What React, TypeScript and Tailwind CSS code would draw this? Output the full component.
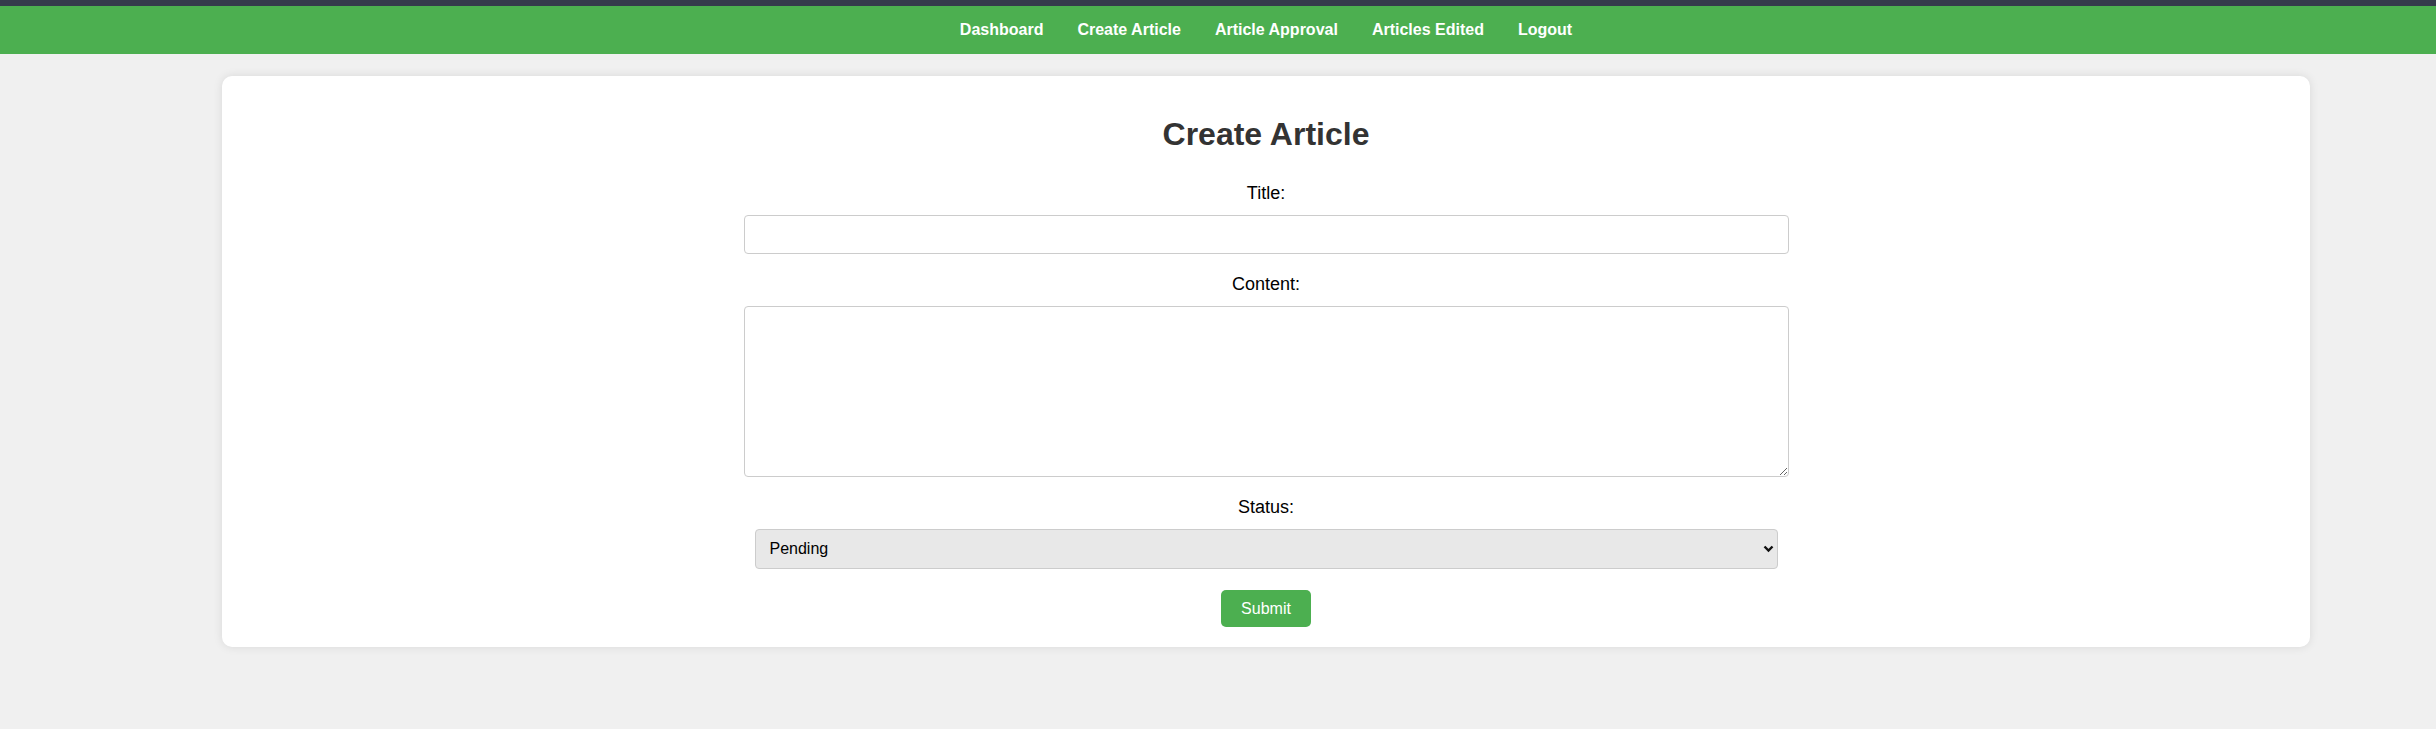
import React from "react";

const navItems = ["Dashboard", "Create Article", "Article Approval", "Articles Edited", "Logout"];

const App: React.FC = () => {
  return (
    <div className="min-h-screen bg-[#f0f0f0] font-['Liberation_Sans',Arial,sans-serif]">
      <div className="h-[6px] bg-[#353b4c]" />
      <nav className="h-[48px] bg-[#4caf50] flex items-center justify-center pl-[96px] gap-[34px]">
        {navItems.map((item) => (
          <a key={item} href="#" className="text-white font-bold text-[16px] leading-[18px]">
            {item}
          </a>
        ))}
      </nav>

      <div className="pl-[96px]">
        <div className="mx-[126px] mt-[22px] bg-white rounded-[10px] p-[20px] shadow-[0_0_10px_rgba(0,0,0,0.1)] flex flex-col items-center">
          <h1 className="mt-[20px] mb-[30px] text-[32px] leading-[37px] font-bold text-[#333]">
            Create Article
          </h1>

          <form className="w-[1045px] flex flex-col items-center">
            <label className="text-[18px] leading-[21px] text-black mb-[11px]">Title:</label>
            <input
              type="text"
              className="w-full h-[39px] px-[10px] border border-[#ccc] rounded-[4px] text-[16px] mb-[20px]"
            />

            <label className="text-[18px] leading-[21px] text-black mb-[11px]">Content:</label>
            <textarea className="w-full h-[171px] px-[10px] py-[10px] border border-[#ccc] rounded-[4px] text-[16px] mb-[20px]" />

            <label className="text-[18px] leading-[21px] text-black mb-[11px]">Status:</label>
            <div className="relative w-[1023px] mb-[21px]">
              <select className="appearance-none w-full h-[40px] pl-[14px] pr-[30px] bg-[#e8e8e8] border border-[#ccc] rounded-[4px] text-[16px] text-black">
                <option>Pending</option>
                <option>Approved</option>
                <option>Rejected</option>
              </select>
              <svg
                className="absolute right-[4px] top-[16px] pointer-events-none"
                width="11"
                height="8"
                viewBox="0 0 11 8"
              >
                <path d="M1.5 1.5 L5.5 5.5 L9.5 1.5" fill="none" stroke="#111" strokeWidth="2.4" />
              </svg>
            </div>

            <button
              type="button"
              className="bg-[#4caf50] text-white text-[16px] leading-[17px] px-[20px] py-[10px] rounded-[5px]"
            >
              Submit
            </button>
          </form>
        </div>
      </div>
    </div>
  );
};

export default App;
